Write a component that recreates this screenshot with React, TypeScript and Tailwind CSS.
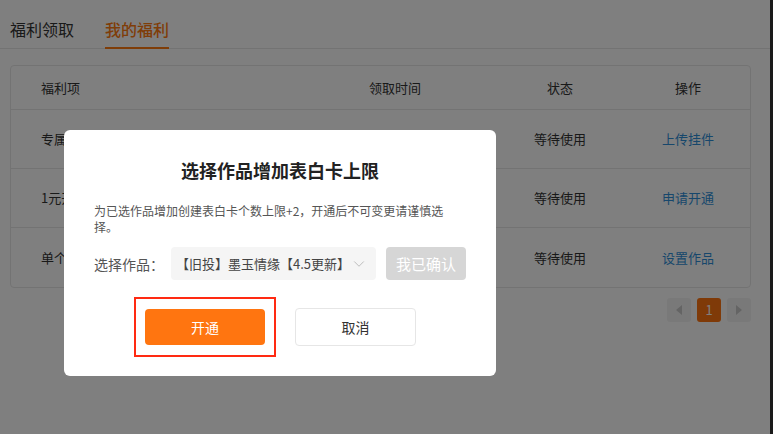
import { ChevronDown } from "lucide-react";

// time column and the rest of each name sit under the dialog in the shot
const rows = [
  { name: "专属挂件", time: "", status: "等待使用", action: "上传挂件" },
  { name: "1元开通", time: "", status: "等待使用", action: "申请开通" },
  { name: "单个作品", time: "", status: "等待使用", action: "设置作品" },
];

export default function App() {
  return (
    <div
      className="flex w-[773px] h-[434px] overflow-hidden bg-white text-[#333]"
      style={{ fontFamily: '"Noto Sans CJK SC", "Noto Sans", sans-serif' }}
    >
      <div className="relative flex-1 h-full">
        {/* Tabs */}
        <div className="flex h-[49px] items-end gap-[31px] border-b border-[#e6e6e6] pl-[10px]">
          <div className="pb-[8px] text-[16px] leading-[22px] text-[#333]">福利领取</div>
          <div className="-mb-px border-b-2 border-[#ff7a10] pb-[7px] text-[16px] font-medium leading-[22px] text-[#ff7a10]">
            我的福利
          </div>
        </div>

        {/* Table */}
        <div className="ml-[10px] mt-[16px] w-[741px] rounded-[4px] border border-[#e6e6e6] text-[13px]">
          <div className="flex h-[44px] items-center border-b border-[#e6e6e6]">
            <div className="w-[285px] pl-[30px]">福利项</div>
            <div className="w-[198px] text-center">领取时间</div>
            <div className="w-[132px] text-center">状态</div>
            <div className="flex-1 text-center">操作</div>
          </div>
          {rows.map((r, i) => (
            <div
              key={r.action}
              className={`flex h-[59px] items-center ${i < rows.length - 1 ? "border-b border-[#e6e6e6]" : ""}`}
            >
              <div className="w-[285px] pl-[30px]">{r.name}</div>
              <div className="w-[198px] text-center">{r.time}</div>
              <div className="w-[132px] text-center">{r.status}</div>
              <div className="flex-1 text-center text-[#2f8fd8]">{r.action}</div>
            </div>
          ))}
        </div>

        {/* Pagination */}
        <div className="mt-[10px] flex w-[751px] justify-end gap-[6px]">
          <div className="flex h-[24px] w-[24px] items-center justify-center rounded-[3px] bg-[#f3f3f3]">
            <div className="h-0 w-0 border-y-[5px] border-r-[6px] border-y-transparent border-r-[#c8c8c8]" />
          </div>
          <div className="flex h-[24px] w-[24px] items-center justify-center rounded-[3px] bg-[#ff7510] text-[13px] text-white">
            1
          </div>
          <div className="flex h-[24px] w-[24px] items-center justify-center rounded-[3px] bg-[#f3f3f3]">
            <div className="h-0 w-0 border-y-[5px] border-l-[6px] border-y-transparent border-l-[#c8c8c8]" />
          </div>
        </div>

        {/* Mask */}
        <div className="absolute inset-0 bg-black/50" />

        {/* Dialog */}
        <div className="absolute left-[64px] top-[130px] w-[432px] rounded-[6px] bg-white px-[30px] pb-[19px] pt-[27px]">
          <h2 className="text-center text-[18px] font-bold leading-[26px] text-[#222]">
            选择作品增加表白卡上限
          </h2>
          <p className="mt-[20px] text-[12px] leading-[16px] text-[#555]">
            为已选作品增加创建表白卡个数上限+2，开通后不可变更请谨慎选择。
          </p>
          <div className="mt-[12px] flex items-center">
            <span className="w-[77px] text-[14px] leading-[18px] text-[#555]">选择作品：</span>
            <div className="flex h-[33px] w-[205px] items-center rounded-[4px] bg-[#f5f5f5] pl-[5px] pr-[9px]">
              <span className="shrink-0 whitespace-nowrap text-[13px] leading-[16px] text-[#444]">【旧投】墨玉情缘【4.5更新】</span>
              <ChevronDown size={18} strokeWidth={1.3} className="-ml-[4px] ml-auto shrink-0 text-[#bbb]" />
            </div>
            <button className="ml-[10px] h-[33px] w-[80px] rounded-[4px] bg-[#d6d6d6] text-[15px] leading-[18px] text-white">
              我已确认
            </button>
          </div>
          <div className="mt-[17px] flex items-center">
            <div className="ml-[40px] border-2 border-[#ff2a12] px-[9px] py-[10px]">
              <button className="h-[36px] w-[120px] rounded-[4px] bg-[#ff7510] text-[14px] text-white">
                开通
              </button>
            </div>
            <button className="ml-[19px] h-[38px] w-[121px] rounded-[4px] border border-[#e6e6e6] bg-white text-[14px] text-[#333]">
              取消
            </button>
          </div>
        </div>
      </div>
      <div className="h-full w-[3px] bg-[#1a1a1a]" />
    </div>
  );
}
